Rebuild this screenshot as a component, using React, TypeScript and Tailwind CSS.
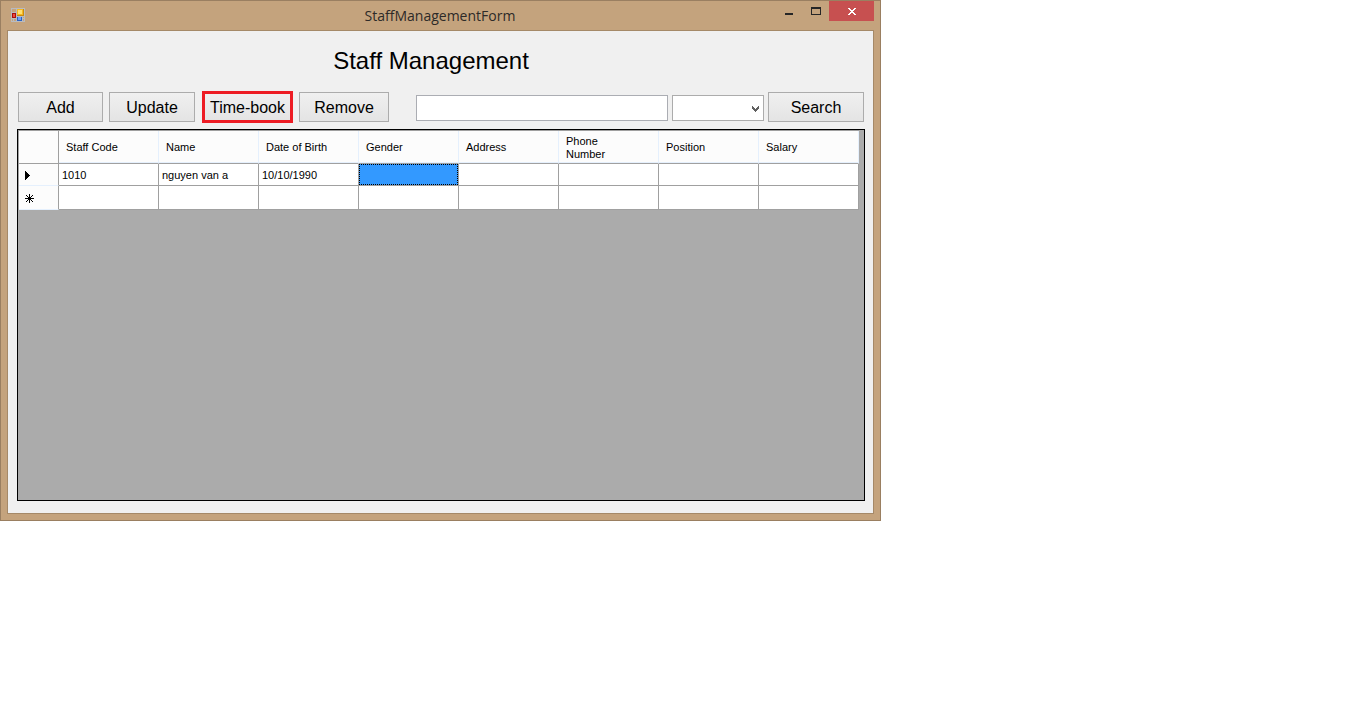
import React from "react";

const columns = [
  "Staff Code",
  "Name",
  "Date of Birth",
  "Gender",
  "Address",
  "Phone Number",
  "Position",
  "Salary",
];

const staff = ["1010", "nguyen van a", "10/10/1990", "", "", "", "", ""];
const SELECTED_COLUMN = 3;

function FormIcon() {
  return (
    <svg width="14" height="14" viewBox="0 0 14 14" shapeRendering="crispEdges" aria-hidden="true">
      <path d="M0 0h14v14h-14z" fill="#b9bbc0" />
      <path d="M1 1h4v3h-4zM1 11h1v2h-1zM3 11h2v2h-2zM12 9h1v1h-1zM12 11h1v2h-1z" fill="#c4a37d" />
      <path d="M6 1h7v7h-7z" fill="#c98a10" />
      <path d="M6 1h6v6h-6z" fill="#f5b921" />
      <path d="M7 2h4v4h-4z" fill="#ffdf72" />
      <path d="M1 5h4v5h-4z" fill="#a80f0f" />
      <path d="M2 6h2v3h-2z" fill="#ee4a3c" />
      <path d="M6 9h5v4h-5z" fill="#2b62c4" />
      <path d="M7 9h3v3h-3z" fill="#6fa0f2" />
    </svg>
  );
}

function TitleBar() {
  return (
    <header className="flex h-[29px] items-start">
      <span className="pt-[7px] pl-[4px]">
        <FormIcon />
      </span>
      <h1 className="flex-1 pt-[5px] pl-[80px] text-center font-['Open_Sans','Noto_Sans',sans-serif] text-[14px] leading-[20px] text-[#2d2a28]">
        StaffManagementForm
      </h1>
      <button type="button" aria-label="Minimize" className="flex h-5 w-[27px] items-center justify-center">
        <svg width="10" height="14" viewBox="0 0 10 14" shapeRendering="crispEdges">
          <path d="M1 9h8v2h-8z" fill="#262626" />
        </svg>
      </button>
      <button type="button" aria-label="Maximize" className="flex h-5 w-[27px] items-center justify-center">
        <svg width="10" height="8" viewBox="0 0 10 8" shapeRendering="crispEdges">
          <path fillRule="evenodd" d="M0 0h10v8h-10zM1 2v5h8v-5z" fill="#262626" />
        </svg>
      </button>
      <button type="button" aria-label="Close" className="flex h-5 w-[45px] items-center justify-center bg-[#c75050]">
        <svg width="8" height="7" viewBox="0 0 8 7" shapeRendering="crispEdges">
          <path
            d="M0 0h2v1h-2zM6 0h2v1h-2zM1 1h2v1h-2zM5 1h2v1h-2zM2 2h4v1h-4zM3 3h2v1h-2zM2 4h4v1h-4zM1 5h2v1h-2zM5 5h2v1h-2zM0 6h2v1h-2zM6 6h2v1h-2z"
            fill="#ffffff"
          />
        </svg>
      </button>
    </header>
  );
}

const buttonBase =
  "shrink-0 bg-linear-to-b from-[#f0f0f0] to-[#e4e4e4] pt-[2px] text-center text-[16px] leading-[20px] text-black";

function Toolbar() {
  return (
    <form className="flex h-8 items-center pl-px" onSubmit={(e) => e.preventDefault()}>
      <button type="button" className={`${buttonBase} mr-[6px] h-[30px] w-[85px] border border-[#acacac]`}>
        Add
      </button>
      <button type="button" className={`${buttonBase} mr-[7px] h-[30px] w-[86px] border border-[#acacac]`}>
        Update
      </button>
      <button
        type="button"
        className={`${buttonBase} mr-[6px] h-8 w-[91px] border-[3px] border-[#ed1c24] whitespace-nowrap`}
      >
        Time-book
      </button>
      <button type="button" className={`${buttonBase} mr-[27px] h-[30px] w-[90px] border border-[#acacac]`}>
        Remove
      </button>
      <div className="flex min-w-0 flex-1 gap-1 pt-[2px] pr-1">
        <input
          type="text"
          aria-label="Search text"
          className="h-[26px] min-w-0 flex-1 border border-[#abadb3] bg-white px-1 text-[16px] outline-none"
        />
        <div className="relative w-[92px] shrink-0">
          <select
            aria-label="Search by"
            defaultValue=""
            className="h-[26px] w-full appearance-none border border-[#acacac] bg-white px-1 text-[12px] outline-none"
          >
            <option value=""></option>
            {columns.map((c) => (
              <option key={c}>{c}</option>
            ))}
          </select>
          <svg
            className="pointer-events-none absolute top-[11px] right-[5px]"
            width="7"
            height="6"
            viewBox="0 0 7 6"
            shapeRendering="crispEdges"
            aria-hidden="true"
          >
            <path
              d="M0 0h1v1h-1zM6 0h1v1h-1zM0 1h2v1h-2zM5 1h2v1h-2zM0 2h3v1h-3zM4 2h3v1h-3zM1 3h5v1h-5zM2 4h3v1h-3zM3 5h1v1h-1z"
              fill="#606060"
            />
          </svg>
        </div>
      </div>
      <button type="submit" className={`${buttonBase} mr-px h-[30px] w-[96px] border border-[#acacac]`}>
        Search
      </button>
    </form>
  );
}

function StaffTable() {
  return (
    <div className="mt-[6px] min-h-[372px] border border-black bg-[#ababab] pr-[5px]">
      <table className="w-full table-fixed border-separate border-spacing-0 border-t border-l border-[#a0a0a0] text-left text-[11px] leading-[13px] text-black">
        <colgroup>
          <col className="w-[40px]" />
          {columns.map((c) => (
            <col key={c} />
          ))}
        </colgroup>
        <thead>
          <tr className="h-[33px]">
            <td className="border-r border-b border-[#a0a0a0] bg-[#fcfcfc] p-0" />
            {columns.map((c) => (
              <th
                key={c}
                scope="col"
                className="border-r border-b border-r-[#e5f0fd] border-b-[#a0a0a0] bg-[#fcfcfc] pt-px pr-7 pb-0 pl-[7px] font-normal shadow-[inset_0_-1px_0_#e5f0fd]"
              >
                <span className={c === "Phone Number" ? "block" : "block whitespace-nowrap"}>{c}</span>
              </th>
            ))}
          </tr>
        </thead>
        <tbody>
          <tr className="h-[22px]">
            <th scope="row" aria-label="Current row" className="border-r border-b border-r-[#a0a0a0] border-b-[#e5f0fd] bg-[#fcfcfc] pt-[2px] pr-0 pb-0 pl-[6px]">
              <svg width="5" height="9" viewBox="0 0 5 9" shapeRendering="crispEdges" aria-hidden="true">
                <path d="M0 0h1v1h1v1h1v1h1v1h1v1h-1v1h-1v1h-1v1h-1v1h-1z" fill="#000000" />
              </svg>
            </th>
            {staff.map((value, i) => (
              <td
                key={columns[i]}
                className={
                  i === SELECTED_COLUMN
                    ? "border-r border-b border-[#a0a0a0] bg-[#3399ff] p-0"
                    : "border-r border-b border-[#a0a0a0] bg-white pt-[2px] pr-0 pb-0 pl-[3px] whitespace-nowrap"
                }
              >
                {i === SELECTED_COLUMN ? <div className="h-[21px] border border-dotted border-black" /> : value}
              </td>
            ))}
          </tr>
          <tr className="h-[24px]">
            <th scope="row" aria-label="New row" className="border-r border-b border-r-[#a0a0a0] border-b-[#e5f0fd] bg-[#fcfcfc] pt-[2px] pr-0 pb-0 pl-[6px]">
              <svg width="9" height="9" viewBox="0 0 9 9" shapeRendering="crispEdges" aria-hidden="true">
                <path
                  d="M4 0h1v9h-1zM0 4h9v1h-9zM1 1h1v1h-1zM2 2h1v1h-1zM3 3h3v3h-3zM6 2h1v1h-1zM7 1h1v1h-1zM2 6h1v1h-1zM1 7h1v1h-1zM6 6h1v1h-1zM7 7h1v1h-1z"
                  fill="#000000"
                />
              </svg>
            </th>
            {columns.map((c) => (
              <td key={c} className="border-r border-b border-[#a0a0a0] bg-white p-0" />
            ))}
          </tr>
        </tbody>
      </table>
    </div>
  );
}

export default function App() {
  return (
    <div className="min-h-screen bg-white font-['Liberation_Sans',Arial,sans-serif]">
      <div className="w-full max-w-[881px] border border-[#9a7f61] bg-[#c4a37d] px-[6px] pb-[6px]">
        <TitleBar />
        <main className="border border-[#a58968] bg-[#f0f0f0] pt-[14px] pr-[8px] pb-[12px] pl-[9px]">
          <h2 className="mb-[14px] pr-[20px] text-center text-[24px] leading-[32px] text-black">Staff Management</h2>
          <Toolbar />
          <StaffTable />
        </main>
      </div>
    </div>
  );
}
